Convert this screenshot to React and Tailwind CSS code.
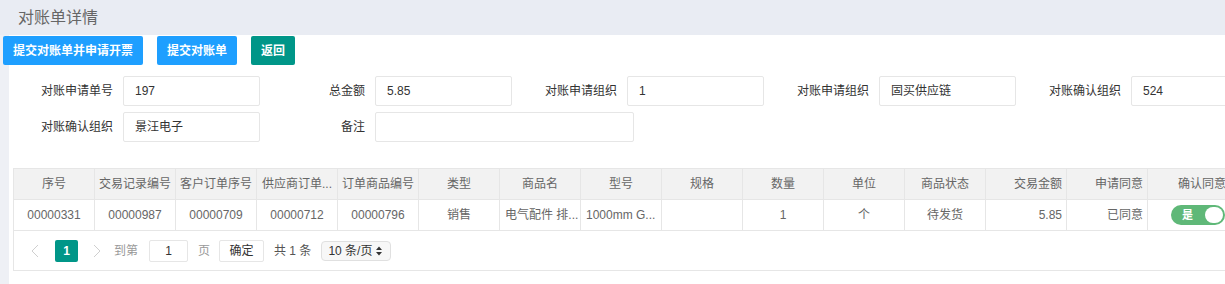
import React from "react";

const font = { fontFamily: '"Liberation Sans", "Noto Sans CJK SC", sans-serif' };

function Field({ label, value, wide }) {
  return (
    <div className="flex items-center mr-[5px]">
      <div className="w-[100px] text-right text-[12px] text-[#333]">{label}</div>
      <div
        className={`ml-[10px] h-[30px] ${wide ? "w-[259px]" : "w-[137px]"} border border-[#e6e6e6] rounded-[2px] bg-white flex items-center pl-[11px] text-[12px] text-[#333]`}
      >
        {value}
      </div>
    </div>
  );
}

const headers = [
  ["序号", "c"],
  ["交易记录编号", "c"],
  ["客户订单序号", "c"],
  ["供应商订单...", "c"],
  ["订单商品编号", "c"],
  ["类型", "c"],
  ["商品名", "c"],
  ["型号", "c"],
  ["规格", "c"],
  ["数量", "c"],
  ["单位", "c"],
  ["商品状态", "c"],
  ["交易金额", "r"],
  ["申请同意", "r"],
  ["确认同意", "c"],
];

const row = [
  ["00000331", "c"],
  ["00000987", "c"],
  ["00000709", "c"],
  ["00000712", "c"],
  ["00000796", "c"],
  ["销售", "c"],
  ["电气配件 排...", "l"],
  ["1000mm G...", "l"],
  ["", "c"],
  ["1", "c"],
  ["个", "c"],
  ["待发货", "c"],
  ["5.85", "r"],
  ["已同意", "r"],
];

function Cell({ text, align, header, last }) {
  const al =
    align === "r" ? "text-right" : align === "l" ? "text-left" : "text-center";
  return (
    <div
      className={`h-[31px] leading-[30px] ${align === "l" ? "pl-[5px] pr-0" : "px-[4px]"} ${al} whitespace-nowrap overflow-hidden text-[12px] text-[#666] border-b border-[#e6e6e6] ${
        last ? "" : "border-r"
      } ${header ? "bg-[#f2f2f2]" : "bg-white"}`}
    >
      {text}
    </div>
  );
}

export default function App() {
  return (
    <div className="w-[1225px] h-[284px] overflow-hidden bg-[#eef0f5]" style={font}>
      <div className="h-[35px] bg-[#e9ecf3] flex items-center pl-[18px] text-[16px] text-[#666]">
        对账单详情
      </div>
      <div className="ml-[9px] h-[249px] bg-white">
        <div className="flex gap-[14px] -ml-[6px] pt-[1px]">
          <button className="h-[29px] px-[10px] rounded-[2px] bg-[#1E9FFF] text-white text-[12px] font-bold">
            提交对账单并申请开票
          </button>
          <button className="h-[29px] px-[10px] rounded-[2px] bg-[#1E9FFF] text-white text-[12px] font-bold">
            提交对账单
          </button>
          <button className="h-[29px] px-[10px] rounded-[2px] bg-[#009688] text-white text-[12px] font-bold">
            返回
          </button>
        </div>

        <div className="pl-[4px] pt-[11px] flex flex-col gap-[6px]">
          <div className="flex">
            <Field label="对账申请单号" value="197" />
            <Field label="总金额" value="5.85" />
            <Field label="对账申请组织" value="1" />
            <Field label="对账申请组织" value="固买供应链" />
            <Field label="对账确认组织" value="524" />
          </div>
          <div className="flex">
            <Field label="对账确认组织" value="景汪电子" />
            <Field label="备注" value="" wide />
          </div>
        </div>

        <div className="pl-[4px] pt-[26px]">
          <div className="w-[1242px] border border-[#e6e6e6]">
            <div className="grid grid-cols-[repeat(14,81px)_108px]">
              {headers.map(([t, a], i) => (
                <Cell key={"h" + i} text={t} align={a} header last={i === 14} />
              ))}
              {row.map(([t, a], i) => (
                <Cell key={"b" + i} text={t} align={a} />
              ))}
              <div className="h-[31px] border-b border-[#e6e6e6] flex items-center pl-[23px]">
                <div className="w-[54px] h-[20px] rounded-full bg-[#5FB878] flex items-center justify-between pl-[11px] pr-[2px]">
                  <span className="text-white text-[11px] font-bold">是</span>
                  <span className="w-[18px] h-[16px] rounded-full bg-white" />
                </div>
              </div>
            </div>
            <div className="h-[39px] flex items-center text-[12px] pl-[17px]">
              <svg width="8" height="14" viewBox="0 0 8 14" className="mr-[16px]">
                <path d="M7 1 L1 7 L7 13" fill="none" stroke="#cfcfcf" strokeWidth="1" />
              </svg>
              <div className="w-[23px] h-[22px] rounded-[2px] bg-[#009688] text-white font-bold flex items-center justify-center">
                1
              </div>
              <svg width="8" height="14" viewBox="0 0 8 14" className="ml-[15px] mr-[13px]">
                <path d="M1 1 L7 7 L1 13" fill="none" stroke="#cfcfcf" strokeWidth="1" />
              </svg>
              <span className="text-[#999]">到第</span>
              <div className="ml-[11px] w-[39px] h-[22px] border border-[#e6e6e6] rounded-[2px] flex items-center justify-center text-[#333]">
                1
              </div>
              <span className="ml-[10px] text-[#999]">页</span>
              <div className="ml-[9px] w-[45px] h-[22px] border border-[#e6e6e6] rounded-[2px] flex items-center justify-center text-[#333]">
                确定
              </div>
              <span className="ml-[10px] text-[#555]">共 1 条</span>
              <div className="ml-[10px] w-[70px] h-[20px] border border-[#e0e0e0] rounded-[4px] bg-[#f7f7f7] flex items-center pl-[6px] gap-[4px] text-[#333]">
                <span>10 条/页</span>
                <svg width="6" height="10" viewBox="0 0 6 10">
                  <path d="M0 4 L3 0.5 L6 4 Z M0 6 L3 9.5 L6 6 Z" fill="#333" />
                </svg>
              </div>
            </div>
          </div>
        </div>
      </div>
    </div>
  );
}
